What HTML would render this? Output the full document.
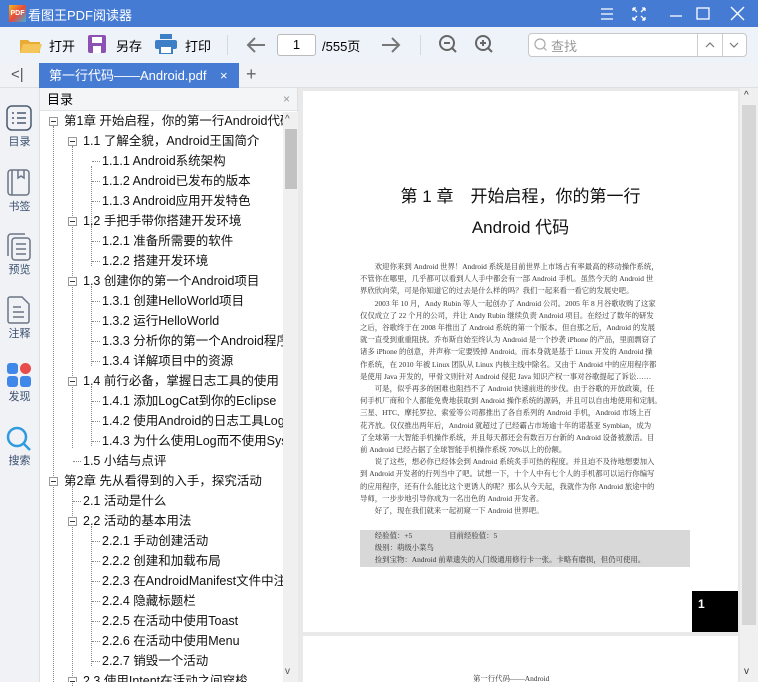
<!DOCTYPE html>
<html><head><meta charset="utf-8"><style>
*{margin:0;padding:0;box-sizing:border-box}
body{width:758px;height:682px;overflow:hidden;font-family:"Liberation Sans","Noto Sans CJK SC",sans-serif;background:#fff;position:relative}
.abs{position:absolute}
#title{left:0;top:0;width:758px;height:27px;background:#467bd3;color:#fff;font-size:13px}
#tb{left:0;top:27px;width:758px;height:36px;background:#eef3f9}
#tabs{left:0;top:63px;width:758px;height:25px;background:#f0f2f5;border-bottom:1px solid #dcdfe4}
#side{left:0;top:88px;width:39px;height:594px;background:#f0f2f5}
#toc{left:39px;top:88px;width:259px;height:594px;background:#fff;border-left:1px solid #dcdfe4;border-right:1px solid #dcdfe4}
.r{position:absolute;font-size:12.5px;color:#111;white-space:nowrap;line-height:20px}
.bx{position:absolute;width:9px;height:9px;border:1px solid #999;background:#fff}
.bx:after{content:"";position:absolute;left:1px;top:3px;width:5px;height:1px;background:#333}
.vl{position:absolute;border-left:1px dotted #888}
.hl{position:absolute;border-top:1px dotted #888;width:8px}
#view{left:298px;top:88px;width:460px;height:594px;background:#e9e9e9}
.page{position:absolute;background:#fff}
.pt{position:absolute;font-family:"Liberation Serif","Noto Serif CJK SC",serif;font-size:7.4px;color:#333;line-height:12.2px;white-space:nowrap}
.lab{font-size:11px;color:#3a5070;text-align:center;width:39px;left:0;position:absolute}
</style></head><body>
<div id="title" class="abs">
 <div class="abs" style="left:9px;top:5px;width:17px;height:17px;background:linear-gradient(135deg,#f6b81d,#e84a3a 50%,#3bb0e0);font-size:7px;font-weight:bold;line-height:17px;text-align:center">PDF</div>
 <div class="abs" style="left:28px;top:5px">看图王PDF阅读器</div>
 <svg class="abs" style="left:600px;top:6px" width="158" height="16" stroke="#fff" fill="none" stroke-width="1.3">
  <path d="M1 3h12M1 8h12M1 13h12"/><path d="M33 2l4 4M33 2h3M33 2v3M45 2l-4 4M45 2h-3M45 2v3M33 14l4-4M33 14h3M33 14v-3M45 14l-4-4M45 14h-3M45 14v-3"/>
  <path d="M70 10h12"/><rect x="97" y="2" width="12" height="11"/><path d="M131 1l13 13M144 1l-13 13"/>
 </svg>
</div>
<div id="tb" class="abs">
 <svg class="abs" style="left:19px;top:8px" width="24" height="20"><path d="M1 5h8l2 2h10v11H1z" fill="#e8ac35"/><path d="M4 9h19l-3 9H1z" fill="#f3c55a"/></svg>
 <div class="abs" style="left:49px;top:9px;font-size:13px">打开</div>
 <svg class="abs" style="left:88px;top:8px" width="18" height="18"><rect x="0" y="0" width="18" height="18" rx="2" fill="#8b51b3"/><rect x="4" y="2" width="10" height="6" fill="#fff"/><rect x="5" y="11" width="8" height="7" fill="#fff"/></svg>
 <div class="abs" style="left:116px;top:9px;font-size:13px">另存</div>
 <svg class="abs" style="left:155px;top:7px" width="22" height="20"><rect x="5" y="0" width="12" height="5" fill="#3d7fc6"/><rect x="0" y="6" width="22" height="9" rx="2" fill="#3d7fc6"/><rect x="5" y="12" width="12" height="8" fill="#fff" stroke="#3d7fc6" stroke-width="2"/></svg>
 <div class="abs" style="left:185px;top:9px;font-size:13px">打印</div>
 <div class="abs" style="left:227px;top:8px;width:1px;height:20px;background:#d5d9de"></div>
 <svg class="abs" style="left:246px;top:9px" width="20" height="18" stroke="#777" stroke-width="2" fill="none"><path d="M19 9H2M9 2L2 9l7 7"/></svg>
 <div class="abs" style="left:277px;top:7px;width:39px;height:22px;border:1px solid #bbb;border-radius:3px;background:#fff;font-size:13px;text-align:center;line-height:20px">1</div>
 <div class="abs" style="left:322px;top:9px;font-size:13px">/555页</div>
 <svg class="abs" style="left:381px;top:9px" width="20" height="18" stroke="#777" stroke-width="2" fill="none"><path d="M1 9h17M11 2l7 7-7 7"/></svg>
 <div class="abs" style="left:420px;top:8px;width:1px;height:20px;background:#d5d9de"></div>
 <svg class="abs" style="left:439px;top:7px" width="64" height="22" stroke="#666" stroke-width="2" fill="none"><circle cx="8" cy="9" r="7"/><path d="M13 14l4 4M5 9h6"/><circle cx="44" cy="9" r="7"/><path d="M49 14l4 4M41 9h6M44 6v6"/></svg>
 <div class="abs" style="left:528px;top:6px;width:219px;height:24px;border:1px solid #c8c8c8;border-radius:4px;background:#fff"></div>
 <div class="abs" style="left:697px;top:7px;width:1px;height:22px;background:#ccc"></div>
 <div class="abs" style="left:722px;top:7px;width:1px;height:22px;background:#ccc"></div>
 <svg class="abs" style="left:534px;top:11px" width="14" height="14" stroke="#aaa" fill="none" stroke-width="1.2"><circle cx="6" cy="6" r="5"/><path d="M9.5 9.5l3 3"/></svg>
 <div class="abs" style="left:551px;top:9px;font-size:13px;color:#999">查找</div>
 <svg class="abs" style="left:705px;top:14px" width="40" height="8" stroke="#777" fill="none" stroke-width="1.2"><path d="M1 6l4-4 4 4M25 2l4 4 4-4"/></svg>
</div>
<div id="tabs" class="abs">
 <div class="abs" style="left:11px;top:3px;font-size:15px;color:#555">&lt;|</div>
 <div class="abs" style="left:39px;top:0;width:200px;height:25px;background:#467bd3;color:#fff;font-size:13px;line-height:25px;padding-left:10px">第一行代码——Android.pdf<span style="position:absolute;left:181px">×</span></div>
 <div class="abs" style="left:246px;top:1px;font-size:18px;color:#666">+</div>
</div>
<div id="side" class="abs">
 <svg class="abs" style="left:6px;top:17px" width="26" height="26" fill="none" stroke="#4b5a70" stroke-width="1.5"><rect x="1" y="1" width="24" height="24" rx="5"/><path d="M6 8h2M11 8h9M6 13h2M11 13h9M6 18h2M11 18h9"/></svg>
 <div class="lab" style="top:45px">目录</div>
 <svg class="abs" style="left:7px;top:81px" width="24" height="28" fill="none" stroke="#6a7585" stroke-width="1.5"><rect x="1" y="1" width="21" height="25" rx="3"/><path d="M5 1v25M11 1v8l3-2 3 2V1"/></svg>
 <div class="lab" style="top:110px">书签</div>
 <svg class="abs" style="left:6px;top:145px" width="26" height="28" fill="none" stroke="#6a7585" stroke-width="1.5"><path d="M2 23V4a3 3 0 0 1 3-3h14"/><rect x="6" y="5" width="18" height="22" rx="3"/><path d="M10 11h10M10 16h10M10 21h10"/></svg>
 <div class="lab" style="top:173px">预览</div>
 <svg class="abs" style="left:7px;top:208px" width="24" height="28" fill="none" stroke="#6a7585" stroke-width="1.5"><path d="M1 3a2 2 0 0 1 2-2h12l7 7v17a2 2 0 0 1-2 2H3a2 2 0 0 1-2-2z"/><path d="M6 11h8M6 16h11M6 21h11"/></svg>
 <div class="lab" style="top:237px">注释</div>
 <div class="abs" style="left:7px;top:275px;width:11px;height:11px;border-radius:3px;background:#3f87e8"></div>
 <div class="abs" style="left:20px;top:275px;width:11px;height:11px;border-radius:50%;background:#e84c4c"></div>
 <div class="abs" style="left:7px;top:288px;width:11px;height:11px;border-radius:3px;background:#3f87e8"></div>
 <div class="abs" style="left:20px;top:288px;width:11px;height:11px;border-radius:3px;background:#3f87e8"></div>
 <div class="lab" style="top:300px">发现</div>
 <svg class="abs" style="left:6px;top:338px" width="26" height="26" fill="none" stroke="#2e9be0" stroke-width="2.5"><circle cx="11" cy="11" r="9"/><path d="M18 18l6 6"/></svg>
 <div class="lab" style="top:364px">搜索</div>
</div>
<div id="toc" class="abs">
 <div class="abs" style="left:0;top:0;width:257px;height:23px;background:#f4f5f7;border-bottom:1px solid #e2e2e2;font-size:13px;line-height:23px;padding-left:7px">目录<span style="position:absolute;left:243px;color:#999;font-size:12px">×</span></div>
 <div class="abs" style="left:243px;top:24px;width:15px;height:570px;background:#f0f0f0"></div>
 <div class="abs" style="left:245px;top:41px;width:12px;height:60px;background:#c2c2c2"></div>
 <div class="abs" style="left:245px;top:26px;font-size:10px;color:#555">^</div>
 <div class="abs" style="left:245px;top:578px;font-size:10px;color:#555">v</div>
 <div class="vl" style="left:13px;top:38px;height:556px"></div>
 <div class="vl" style="left:32px;top:58px;height:302px"></div>
 <div class="vl" style="left:51px;top:78px;height:60px"></div>
 <div class="vl" style="left:51px;top:138px;height:40px"></div>
 <div class="vl" style="left:51px;top:198px;height:80px"></div>
 <div class="vl" style="left:51px;top:298px;height:60px"></div>
 <div class="vl" style="left:32px;top:398px;height:200px"></div>
 <div class="vl" style="left:51px;top:438px;height:140px"></div>
 <div style="position:absolute;left:0;top:0;width:243px;height:594px;overflow:hidden">
 <div class="bx" style="left:9px;top:29px"></div><div class="r" style="left:24px;top:23px">第1章 开始启程，你的第一行Android代码</div>
 <div class="bx" style="left:28px;top:49px"></div><div class="r" style="left:43px;top:43px">1.1 了解全貌，Android王国简介</div>
 <div class="hl" style="left:52px;top:73px"></div><div class="r" style="left:62px;top:63px">1.1.1 Android系统架构</div>
 <div class="hl" style="left:52px;top:93px"></div><div class="r" style="left:62px;top:83px">1.1.2 Android已发布的版本</div>
 <div class="hl" style="left:52px;top:113px"></div><div class="r" style="left:62px;top:103px">1.1.3 Android应用开发特色</div>
 <div class="bx" style="left:28px;top:129px"></div><div class="r" style="left:43px;top:123px">1.2 手把手带你搭建开发环境</div>
 <div class="hl" style="left:52px;top:153px"></div><div class="r" style="left:62px;top:143px">1.2.1 准备所需要的软件</div>
 <div class="hl" style="left:52px;top:173px"></div><div class="r" style="left:62px;top:163px">1.2.2 搭建开发环境</div>
 <div class="bx" style="left:28px;top:189px"></div><div class="r" style="left:43px;top:183px">1.3 创建你的第一个Android项目</div>
 <div class="hl" style="left:52px;top:213px"></div><div class="r" style="left:62px;top:203px">1.3.1 创建HelloWorld项目</div>
 <div class="hl" style="left:52px;top:233px"></div><div class="r" style="left:62px;top:223px">1.3.2 运行HelloWorld</div>
 <div class="hl" style="left:52px;top:253px"></div><div class="r" style="left:62px;top:243px">1.3.3 分析你的第一个Android程序</div>
 <div class="hl" style="left:52px;top:273px"></div><div class="r" style="left:62px;top:263px">1.3.4 详解项目中的资源</div>
 <div class="bx" style="left:28px;top:289px"></div><div class="r" style="left:43px;top:283px">1.4 前行必备，掌握日志工具的使用</div>
 <div class="hl" style="left:52px;top:313px"></div><div class="r" style="left:62px;top:303px">1.4.1 添加LogCat到你的Eclipse</div>
 <div class="hl" style="left:52px;top:333px"></div><div class="r" style="left:62px;top:323px">1.4.2 使用Android的日志工具Log</div>
 <div class="hl" style="left:52px;top:353px"></div><div class="r" style="left:62px;top:343px">1.4.3 为什么使用Log而不使用System</div>
 <div class="hl" style="left:33px;top:373px"></div><div class="r" style="left:43px;top:363px">1.5 小结与点评</div>
 <div class="bx" style="left:9px;top:389px"></div><div class="r" style="left:24px;top:383px">第2章 先从看得到的入手，探究活动</div>
 <div class="hl" style="left:33px;top:413px"></div><div class="r" style="left:43px;top:403px">2.1 活动是什么</div>
 <div class="bx" style="left:28px;top:429px"></div><div class="r" style="left:43px;top:423px">2.2 活动的基本用法</div>
 <div class="hl" style="left:52px;top:453px"></div><div class="r" style="left:62px;top:443px">2.2.1 手动创建活动</div>
 <div class="hl" style="left:52px;top:473px"></div><div class="r" style="left:62px;top:463px">2.2.2 创建和加载布局</div>
 <div class="hl" style="left:52px;top:493px"></div><div class="r" style="left:62px;top:483px">2.2.3 在AndroidManifest文件中注册</div>
 <div class="hl" style="left:52px;top:513px"></div><div class="r" style="left:62px;top:503px">2.2.4 隐藏标题栏</div>
 <div class="hl" style="left:52px;top:533px"></div><div class="r" style="left:62px;top:523px">2.2.5 在活动中使用Toast</div>
 <div class="hl" style="left:52px;top:553px"></div><div class="r" style="left:62px;top:543px">2.2.6 在活动中使用Menu</div>
 <div class="hl" style="left:52px;top:573px"></div><div class="r" style="left:62px;top:563px">2.2.7 销毁一个活动</div>
 <div class="bx" style="left:28px;top:589px"></div><div class="r" style="left:43px;top:583px">2.3 使用Intent在活动之间穿梭</div>
 </div>
</div>
<div id="view" class="abs">
 <div class="page" style="left:5px;top:3px;width:435px;height:541px">
  <div class="abs" style="left:0;top:90px;width:435px;text-align:center;font-size:17px;color:#111;line-height:31px">第 1 章　开始启程，你的第一行<br>Android 代码</div>
  <div class="pt" style="left:57px;top:170px">
   　　欢迎你来到 Android 世界！Android 系统是目前世界上市场占有率最高的移动操作系统，<br>不管你在哪里，几乎都可以看到人人手中都会有一部 Android 手机。虽然今天的 Android 世<br>界欣欣向荣，可是你知道它的过去是什么样的吗？我们一起来看一看它的发展史吧。<br>
   　　2003 年 10 月，Andy Rubin 等人一起创办了 Android 公司。2005 年 8 月谷歌收购了这家<br>仅仅成立了 22 个月的公司，并让 Andy Rubin 继续负责 Android 项目。在经过了数年的研发<br>之后，谷歌终于在 2008 年推出了 Android 系统的第一个版本。但自那之后，Android 的发展<br>就一直受到重重阻挠。乔布斯自始至终认为 Android 是一个抄袭 iPhone 的产品，里面剽窃了<br>诸多 iPhone 的创意，并声称一定要毁掉 Android。而本身就是基于 Linux 开发的 Android 操<br>作系统，在 2010 年被 Linux 团队从 Linux 内核主线中除名。又由于 Android 中的应用程序都<br>是使用 Java 开发的，甲骨文则针对 Android 侵犯 Java 知识产权一事对谷歌提起了诉讼……<br>
   　　可是，似乎再多的困难也阻挡不了 Android 快速前进的步伐。由于谷歌的开放政策，任<br>何手机厂商和个人都能免费地获取到 Android 操作系统的源码，并且可以自由地使用和定制。<br>三星、HTC、摩托罗拉、索爱等公司都推出了各自系列的 Android 手机，Android 市场上百<br>花齐放。仅仅推出两年后，Android 就超过了已经霸占市场逾十年的诺基亚 Symbian，成为<br>了全球第一大智能手机操作系统，并且每天都还会有数百万台新的 Android 设备被激活。目<br>前 Android 已经占据了全球智能手机操作系统 70%以上的份额。<br>
   　　说了这些，想必你已经体会到 Android 系统炙手可热的程度。并且迫不及待地想要加入<br>到 Android 开发者的行列当中了吧。试想一下，十个人中有七个人的手机都可以运行你编写<br>的应用程序，还有什么能比这个更诱人的呢？那么从今天起，我就作为你 Android 旅途中的<br>导师，一步步地引导你成为一名出色的 Android 开发者。<br>
   　　好了，现在我们就来一起初窥一下 Android 世界吧。
  </div>
  <div class="abs" style="left:57px;top:439px;width:330px;height:37px;background:#d8d8d8"></div>
  <div class="pt" style="left:57px;top:439px">　　经验值：+5　　　　　目前经验值：5<br>　　级别：萌级小菜鸟<br>　　捡到宝物：Android 前辈遗失的入门级通用修行卡一张。卡略有磨损，但仍可使用。</div>
  <div class="abs" style="left:389px;top:500px;width:46px;height:41px;background:#000;color:#fff;font-weight:bold;font-size:12px;padding:6px 0 0 6px">1</div>
 </div>
 <div class="page" style="left:5px;top:548px;width:435px;height:60px">
  <div class="pt" style="left:170px;top:37px">第一行代码——Android</div>
 </div>
 <div class="abs" style="left:442px;top:0;width:18px;height:594px;background:#f0f0f0"></div>
 <div class="abs" style="left:444px;top:17px;width:14px;height:520px;background:#d6d6d6"></div>
 <div class="abs" style="left:446px;top:2px;font-size:10px;color:#333">^</div>
 <div class="abs" style="left:446px;top:578px;font-size:10px;color:#333">v</div>
</div>
</body></html>
